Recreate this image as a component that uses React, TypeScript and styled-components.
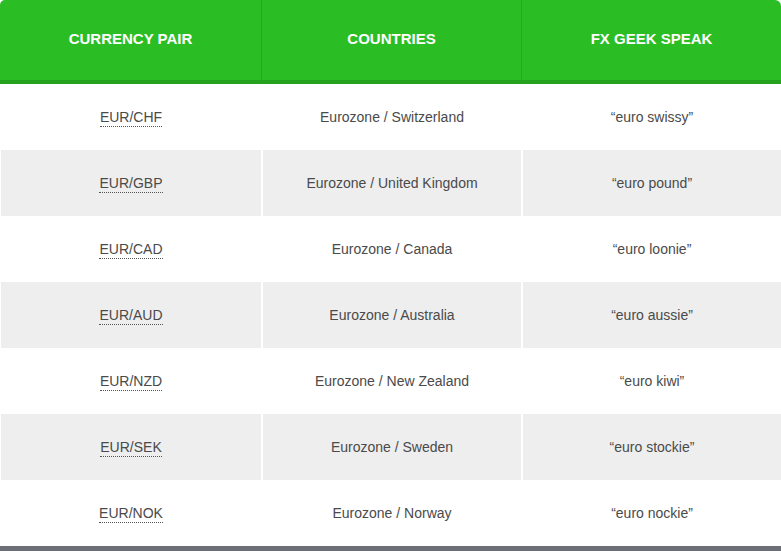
import { ReactElement } from 'react'
import styled, { createGlobalStyle } from 'styled-components'

const GlobalStyle = createGlobalStyle`
  html, body {
    margin: 0;
    padding: 0;
    background: #ffffff;
  }
  body {
    font-family: 'Liberation Sans', Arial, sans-serif;
  }
`

const StyledTable = styled.table`
  width: 781px;
  border-collapse: separate;
  border-spacing: 0;
  table-layout: fixed;
  border-bottom: 6px solid #6c6f75;
`

const StyledHeadCell = styled.th`
  height: 77px;
  padding: 0 0 3px;
  background-color: #2bbd24;
  border-bottom: 4px solid #24a21e;
  border-left: 1px solid #26a920;
  color: #ffffff;
  font-size: 15px;
  font-weight: 700;
  text-align: center;
  vertical-align: middle;

  &:first-child {
    border-left: none;
    border-top-left-radius: 5px;
  }
  &:last-child {
    border-top-right-radius: 6px;
  }
`

const StyledRow = styled.tr<{ $striped: boolean }>`
  background-color: ${(props) => (props.$striped ? '#eeeeee' : '#ffffff')};
`

const StyledCell = styled.td`
  height: 66px;
  padding: 0;
  text-align: center;
  vertical-align: middle;
  font-size: 14px;
  color: #4a4a4a;
  border-left: 2px solid #ffffff;

  &:first-child {
    border-left: 1px solid #ffffff;
  }
`

const StyledPair = styled.abbr`
  text-decoration: none;
  border-bottom: 1px dotted #555555;
  padding-bottom: 1px;
  cursor: help;
`

interface PairRow {
  pair: string
  countries: string
  nickname: string
}

const rows: PairRow[] = [
  { pair: 'EUR/CHF', countries: 'Eurozone / Switzerland', nickname: '“euro swissy”' },
  { pair: 'EUR/GBP', countries: 'Eurozone / United Kingdom', nickname: '“euro pound”' },
  { pair: 'EUR/CAD', countries: 'Eurozone / Canada', nickname: '“euro loonie”' },
  { pair: 'EUR/AUD', countries: 'Eurozone / Australia', nickname: '“euro aussie”' },
  { pair: 'EUR/NZD', countries: 'Eurozone / New Zealand', nickname: '“euro kiwi”' },
  { pair: 'EUR/SEK', countries: 'Eurozone / Sweden', nickname: '“euro stockie”' },
  { pair: 'EUR/NOK', countries: 'Eurozone / Norway', nickname: '“euro nockie”' },
]

const App = (): ReactElement => {
  return (
    <>
      <GlobalStyle />
      <StyledTable>
        <colgroup>
          <col style={{ width: '261px' }} />
          <col style={{ width: '260px' }} />
          <col style={{ width: '260px' }} />
        </colgroup>
        <thead>
          <tr>
            <StyledHeadCell>CURRENCY PAIR</StyledHeadCell>
            <StyledHeadCell>COUNTRIES</StyledHeadCell>
            <StyledHeadCell>FX GEEK SPEAK</StyledHeadCell>
          </tr>
        </thead>
        <tbody>
          {rows.map((row, i) => (
            <StyledRow key={row.pair} $striped={i % 2 === 1}>
              <StyledCell>
                <StyledPair title={row.countries}>{row.pair}</StyledPair>
              </StyledCell>
              <StyledCell>{row.countries}</StyledCell>
              <StyledCell>{row.nickname}</StyledCell>
            </StyledRow>
          ))}
        </tbody>
      </StyledTable>
    </>
  )
}

export default App
